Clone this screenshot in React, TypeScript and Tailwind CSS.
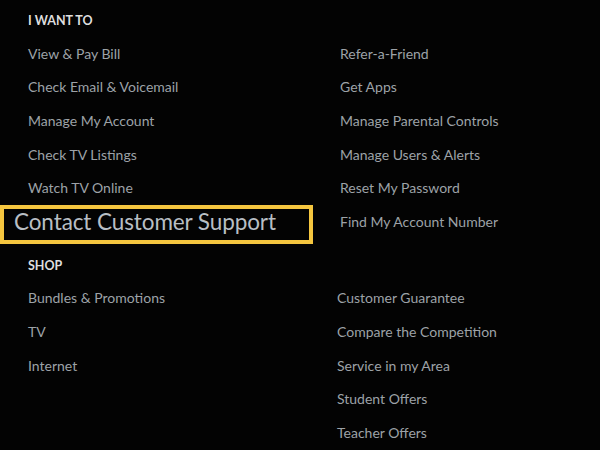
import React from "react";

const wantLeft = [
  "View & Pay Bill",
  "Check Email & Voicemail",
  "Manage My Account",
  "Check TV Listings",
  "Watch TV Online",
];

const wantRight = [
  "Refer-a-Friend",
  "Get Apps",
  "Manage Parental Controls",
  "Manage Users & Alerts",
  "Reset My Password",
  "Find My Account Number",
];

const shopLeft = ["Bundles & Promotions", "TV", "Internet"];

const shopRight = [
  "Customer Guarantee",
  "Compare the Competition",
  "Service in my Area",
  "Student Offers",
  "Teacher Offers",
];

const Link: React.FC<{ label: string }> = ({ label }) => (
  <div className="h-[33.6px] flex items-center text-[14px] text-[#9da2a7] whitespace-nowrap">
    {label}
  </div>
);

const Heading: React.FC<{ label: string }> = ({ label }) => (
  <div className="h-[33.6px] flex items-center pl-7 pt-[4px] text-[12.5px] font-bold text-[#dedede]">
    {label}
  </div>
);

export default function App() {
  return (
    <div
      className="w-[600px] h-[450px] overflow-hidden bg-[#030303] pt-[3px]"
      style={{ fontFamily: "Lato, 'Open Sans', sans-serif" }}
    >
      {/* I want to */}
      <Heading label="I WANT TO" />
      <div className="flex">
        <div className="w-[340px] flex flex-col">
          <div className="pl-7">
            {wantLeft.map((l) => (
              <Link key={l} label={l} />
            ))}
          </div>
          <div className="w-[313px] h-[39px] border-4 border-[#f5c63f] flex items-center pl-[10px] pb-[4px]">
            <span className="text-[22.5px] text-[#b8bec4] tracking-[-0.1px] whitespace-nowrap">
              Contact Customer Support
            </span>
          </div>
        </div>
        <div className="flex-1">
          {wantRight.map((l) => (
            <Link key={l} label={l} />
          ))}
        </div>
      </div>

      {/* Shop */}
      <div className="mt-[4px]">
        <Heading label="SHOP" />
        <div className="flex">
          <div className="w-[337px] pl-7">
            {shopLeft.map((l) => (
              <Link key={l} label={l} />
            ))}
          </div>
          <div className="flex-1">
            {shopRight.map((l) => (
              <Link key={l} label={l} />
            ))}
          </div>
        </div>
      </div>
    </div>
  );
}
